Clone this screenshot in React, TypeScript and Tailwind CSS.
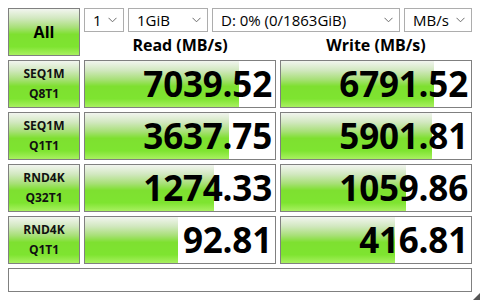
import React from "react";

const grad =
  "bg-[linear-gradient(to_bottom,#f2f5ef_0%,#d2e8c0_20%,#a8e078_40%,#7ee030_55%,#7ee430_82%,#a8f060_100%)]";

function Chevron() {
  return (
    <svg width="9" height="6" viewBox="0 0 9 6" className="shrink-0">
      <path d="M0.5 0.8 L4.5 4.8 L8.5 0.8" fill="none" stroke="#6b6b6b" strokeWidth="1" />
    </svg>
  );
}

function Select({ w, label }: { w: string; label: string }) {
  return (
    <div
      className={`${w} h-[24px] border border-[#adadad] bg-white flex items-center justify-between pl-[8px] pr-[6px] text-[15px] text-black leading-[20px]`}
    >
      <span className="whitespace-nowrap">{label}</span>
      <Chevron />
    </div>
  );
}

function LabelCell({ a, b }: { a: string; b: string }) {
  return (
    <div
      className={`h-[48px] border border-[#808080] ${grad} flex flex-col items-center justify-center text-[12px] font-bold leading-[20px] text-[#111]`}
    >
      <span>{a}</span>
      <span>{b}</span>
    </div>
  );
}

function ValueCell({ v, pct }: { v: string; pct: number }) {
  return (
    <div className="relative h-[48px] border border-[#808080] bg-white overflow-hidden">
      <div className={`absolute left-0 top-0 bottom-0 ${grad}`} style={{ width: `${pct}%` }} />
      <div className="relative h-full flex items-center justify-end pr-[3px] text-[35px] font-bold leading-[44px] text-black tracking-[-0.2px]">
        {v}
      </div>
    </div>
  );
}

const rows = [
  { a: "SEQ1M", b: "Q8T1", r: "7039.52", rp: 81, w: "6791.52", wp: 80.5 },
  { a: "SEQ1M", b: "Q1T1", r: "3637.75", rp: 76, w: "5901.81", wp: 79.5 },
  { a: "RND4K", b: "Q32T1", r: "1274.33", rp: 68, w: "1059.86", wp: 66 },
  { a: "RND4K", b: "Q1T1", r: "92.81", rp: 49, w: "416.81", wp: 60 },
];

export default function App() {
  return (
    <div
      className="relative w-[480px] h-[300px] bg-white p-[8px] overflow-hidden"
      style={{ fontFamily: '"Open Sans", "Noto Sans", sans-serif' }}
    >
      <div className="grid grid-cols-[72px_192px_192px] gap-[4px]">
        <div
          className={`h-[48px] border border-[#808080] ${grad} flex items-center justify-center text-[16px] font-bold text-black`}
        >
          All
        </div>
        <div className="col-span-2 h-[48px] flex flex-col">
          <div className="flex gap-[4px]">
            <Select w="w-[40px]" label="1" />
            <Select w="w-[80px]" label="1GiB" />
            <Select w="w-[188px]" label="D: 0% (0/1863GiB)" />
            <Select w="w-[68px]" label="MB/s" />
          </div>
          <div className="grid grid-cols-2 gap-[4px] flex-1">
            <div className="flex items-center justify-center text-[16px] font-bold text-black pt-[1px]">
              Read (MB/s)
            </div>
            <div className="flex items-center justify-center text-[16px] font-bold text-black pt-[1px]">
              Write (MB/s)
            </div>
          </div>
        </div>
        {rows.map((r, i) => (
          <React.Fragment key={i}>
            <LabelCell a={r.a} b={r.b} />
            <ValueCell v={r.r} pct={r.rp} />
            <ValueCell v={r.w} pct={r.wp} />
          </React.Fragment>
        ))}
        <div className="col-span-3 h-[24px] border border-[#808080] bg-white" />
      </div>
      <svg width="8" height="8" viewBox="0 0 8 8" className="absolute right-0 bottom-0">
        <path d="M8 1 L8 8 L1 8 Z" fill="#555" />
      </svg>
    </div>
  );
}
